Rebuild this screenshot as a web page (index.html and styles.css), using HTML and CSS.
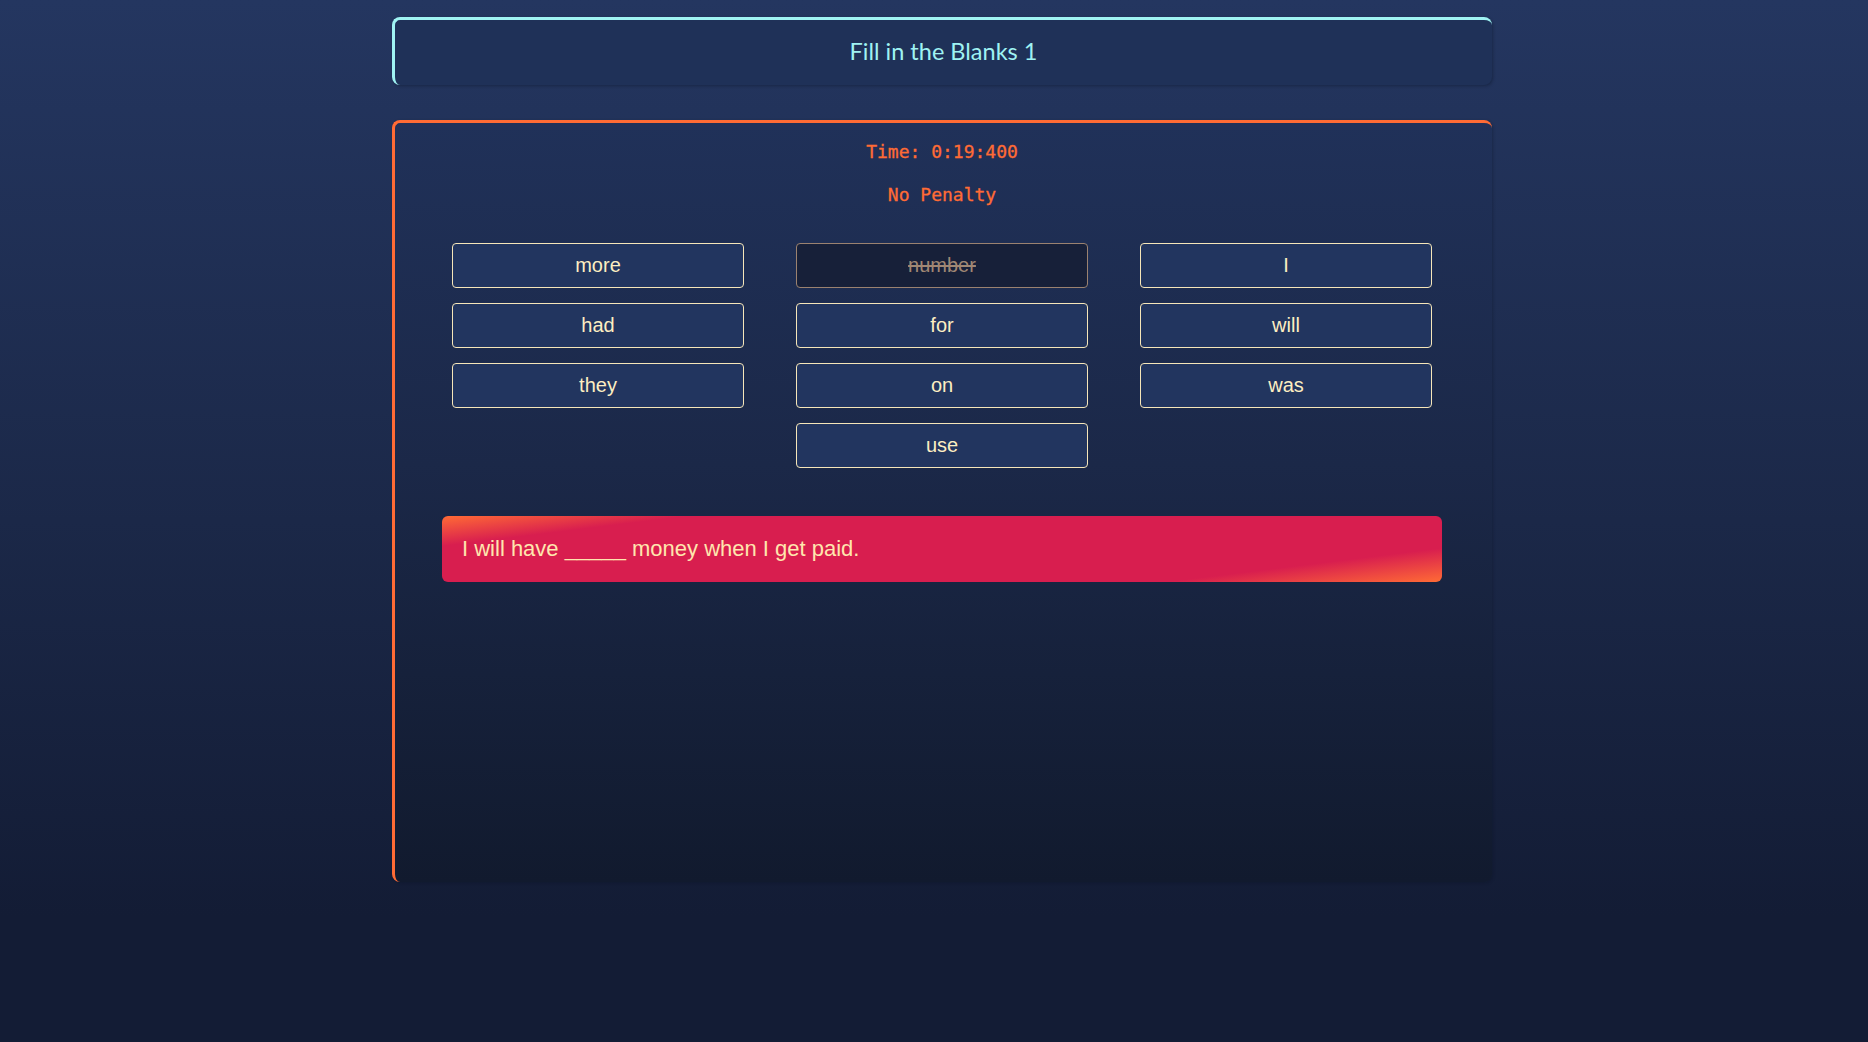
FILE: index.html
```html
<!DOCTYPE html>
<html lang="en">
<head>
<meta charset="utf-8">
<title>Fill in the Blanks 1</title>
<link rel="stylesheet" href="styles.css">
</head>
<body>
<div class="page">
  <header class="title-card">
    <h1 class="title">Fill in the Blanks 1</h1>
  </header>
  <main class="game-card">
    <p class="timer">Time: 0:19:400</p>
    <p class="penalty">No Penalty</p>
    <div class="words">
      <button class="word">more</button>
      <button class="word used">number</button>
      <button class="word">I</button>
      <button class="word">had</button>
      <button class="word">for</button>
      <button class="word">will</button>
      <button class="word">they</button>
      <button class="word">on</button>
      <button class="word">was</button>
      <button class="word">use</button>
    </div>
    <div class="sentence">I will have _____ money when I get paid.</div>
  </main>
</div>
</body>
</html>
```

FILE: styles.css
```css
html, body {
  margin: 0;
  padding: 0;
}

body {
  min-height: 100vh;
  background: linear-gradient(180deg, #243660 0%, #1b2848 50%, #131c35 88%, #131c35 100%);
  font-family: "Liberation Sans", Arial, sans-serif;
}

.page {
  width: 1100px;
  margin: 0 auto;
  padding-top: 17px;
  padding-left: 16px;
}

.title-card {
  height: 65px;
  border-top: 3px solid #9ff3f3;
  border-left: 3px solid #9ff3f3;
  border-radius: 8px;
  background: #1f3158;
  box-shadow: 1px 1px 3px rgba(10, 16, 32, 0.35);
  display: flex;
  align-items: center;
  justify-content: center;
}

.title {
  margin: 0 0 4px 0;
  font-family: "Lato", "Open Sans", sans-serif;
  font-weight: 400;
  font-size: 23.5px;
  color: #9ff3f3;
}

.game-card {
  margin-top: 35px;
  height: 741px;
  padding: 18px 50px 0 47px;
  border-top: 3px solid #ff6b35;
  border-left: 3px solid #ff6b35;
  border-radius: 8px;
  background: linear-gradient(180deg, #203159 0%, #1b2848 45%, #111a2e 100%);
  box-shadow: 1px 1px 3px rgba(10, 16, 32, 0.3);
}

.timer,
.penalty {
  margin: 0;
  text-align: center;
  font-family: "DejaVu Sans Mono", "Liberation Mono", monospace;
  font-size: 18px;
  font-weight: normal;
  line-height: 22px;
  color: #ff6b35;
  -webkit-text-stroke: 0.3px #ff6b35;
}

.penalty {
  margin-top: 21px;
}

.words {
  margin-top: 37px;
  display: flex;
  flex-wrap: wrap;
  justify-content: center;
  gap: 15px 52px;
}

.word {
  width: 292px;
  height: 45px;
  border: 1px solid #f6e6b9;
  border-radius: 4px;
  background: #22355f;
  color: #fdeec2;
  font-family: "Liberation Sans", Arial, sans-serif;
  font-size: 20px;
  padding: 0;
}

.word.used {
  background: #172039;
  border-color: #9b8270;
  color: #a08774;
  text-decoration: line-through;
}

.sentence {
  margin-top: 48px;
  height: 66px;
  box-sizing: border-box;
  padding: 0 20px;
  display: flex;
  align-items: center;
  border-radius: 6px;
  background: linear-gradient(173deg, #ff6b35 0%, #d81e4f 16%, #d81e4f 82%, #ff6b35 100%);
  color: #ffe6ae;
  font-size: 22px;
}
```
